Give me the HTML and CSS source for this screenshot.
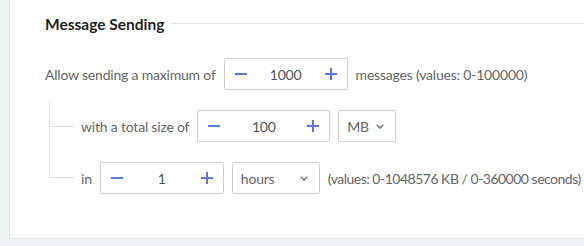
FILE: index.html
```html
<!DOCTYPE html>
<html>
<head>
    <title>Message Sending</title>
    <link rel="stylesheet" href="styles.css">
</head>
<body>
    <div class="card">
        <div class="section-title">
            <span>Message Sending</span>
            <div class="rule"></div>
        </div>

        <div class="row">
            <span class="label">Allow sending a maximum of</span>
            <div class="stepper">
                <button class="step minus"><svg width="12" height="12" viewBox="0 0 12 12"><path d="M0 6h12" /></svg></button>
                <span class="value">1000</span>
                <button class="step plus"><svg width="12" height="12" viewBox="0 0 12 12"><path d="M0 6h12M6 0v12" /></svg></button>
            </div>
            <span class="label">messages (values: 0-100000)</span>
        </div>

        <div class="sub-list">
            <div class="row sub-item">
                <span class="label">with a total size of</span>
                <div class="stepper wide">
                    <button class="step minus"><svg width="12" height="12" viewBox="0 0 12 12"><path d="M0 6h12" /></svg></button>
                    <span class="value">100</span>
                    <button class="step plus"><svg width="12" height="12" viewBox="0 0 12 12"><path d="M0 6h12M6 0v12" /></svg></button>
                </div>
                <div class="select unit-size">
                    <span>MB</span>
                    <svg class="chevron" width="8" height="5" viewBox="0 0 8 5"><path d="M0.8 0.8l3.2 3.2L7.2 0.8" /></svg>
                </div>
            </div>
            <div class="row sub-item">
                <span class="label">in</span>
                <div class="stepper">
                    <button class="step minus"><svg width="12" height="12" viewBox="0 0 12 12"><path d="M0 6h12" /></svg></button>
                    <span class="value">1</span>
                    <button class="step plus"><svg width="12" height="12" viewBox="0 0 12 12"><path d="M0 6h12M6 0v12" /></svg></button>
                </div>
                <div class="select unit-time">
                    <span>hours</span>
                    <svg class="chevron" width="8" height="5" viewBox="0 0 8 5"><path d="M0.8 0.8l3.2 3.2L7.2 0.8" /></svg>
                </div>
                <span class="label hint">(values: 0-1048576 KB / 0-360000 seconds)</span>
            </div>
        </div>
    </div>
</body>
</html>
```

FILE: styles.css
```css
html {
    height: 100%;
    background-color: #eef1f1;
    padding: 0;
    margin: 0;
}

body {
    height: 100%;
    overflow: hidden;
    padding: 0;
    margin: 0;
    font-family: "Lato", "Liberation Sans", sans-serif;
    font-size: 14px;
    letter-spacing: -0.2px;
    color: #666;
}

.card {
    margin-left: 9px;
    height: 224px;
    padding: 14px 0 0 35px;
    background-color: #fff;
    border-bottom: 1px solid #e2e5e5;
    border-left: 1px solid #e2e5e5;
}

.section-title {
    display: flex;
    align-items: center;
    height: 20px;
    font-size: 15.5px;
    font-weight: bold;
    letter-spacing: 0;
    color: #1f1f1f;
}

    .section-title .rule {
        flex: 1;
        height: 1px;
        margin-left: 7px;
        margin-top: -1px;
        background-color: #e4e4e4;
    }

.row {
    display: flex;
    align-items: center;
    gap: 8px;
    height: 32px;
    margin-top: 24px;
    white-space: nowrap;
}

.hint {
    letter-spacing: -0.5px;
}

.stepper {
    display: flex;
    align-items: center;
    justify-content: space-between;
    box-sizing: border-box;
    width: 124px;
    height: 32px;
    padding: 0 10px;
    border: 1px solid #cfcfcf;
    border-radius: 2px;
    color: #555;
}

    .stepper.wide {
        width: 133px;
    }

.step {
    display: flex;
    padding: 0;
    border: 0;
    background: none;
}

    .step svg {
        stroke: #5a78e6;
        stroke-width: 2;
    }

.select {
    display: flex;
    align-items: center;
    justify-content: space-between;
    box-sizing: border-box;
    height: 32px;
    padding: 0 11px 0 8px;
    border: 1px solid #cfcfcf;
    border-radius: 2px;
    color: #666;
}

.unit-size {
    width: 58px;
}

.unit-time {
    width: 88px;
}

.chevron {
    fill: none;
    stroke: #777;
    stroke-width: 1.6;
}

.sub-list {
    margin-left: 4px;
}

.sub-item {
    position: relative;
    margin-top: 20px;
    padding-left: 32px;
}

    .sub-item::before {
        content: "";
        position: absolute;
        left: 0;
        top: -9px;
        width: 24px;
        height: 25px;
        border-left: 1px solid #dedede;
        border-bottom: 1px solid #dedede;
    }

    .sub-item + .sub-item::before {
        top: -35px;
        height: 50px;
    }
```
